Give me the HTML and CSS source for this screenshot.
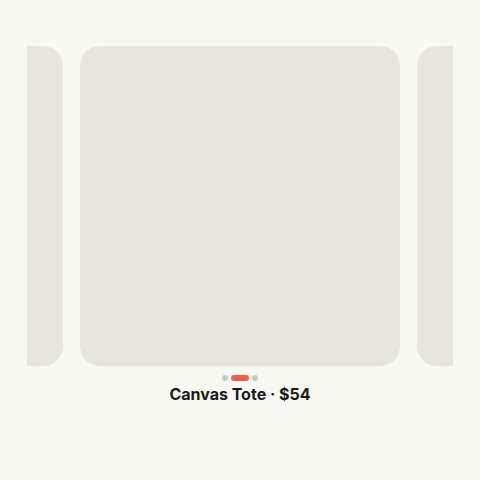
FILE: index.html
```html
<html>
    <head>
        <link rel="stylesheet" href="styles.css">
    </head>
    <body>
        <div class="carousel">
            <div class="track">
                <div class="card"></div>
                <div class="card"></div>
                <div class="card"></div>
            </div>
        </div>
        <div class="dots">
            <span class="dot"></span>
            <span class="dot active"></span>
            <span class="dot"></span>
        </div>
        <div class="title">Canvas Tote · $54</div>
    </body>
</html>
```

FILE: styles.css
```css
body
{
    margin: 0;
    background: #f9f9f4;
    font-family: Inter, "Liberation Sans", sans-serif;
}
.carousel
{
    width: 426px;
    margin: 46px auto 0;
    overflow: hidden;
    display: flex;
    justify-content: center;
}
.track
{
    display: flex;
    gap: 17px;
    flex-shrink: 0;
}
.card
{
    width: 320px;
    height: 320px;
    flex-shrink: 0;
    border-radius: 20px;
    background: #e8e5df;
}
.dots
{
    display: flex;
    justify-content: center;
    gap: 3px;
    margin-top: 9px;
}
.dot
{
    width: 6px;
    height: 6px;
    border-radius: 3px;
    background: #cac8c2;
}
.dot.active
{
    width: 18px;
    background: #f0604f;
}
.title
{
    margin-top: 3px;
    text-align: center;
    font-size: 16px;
    line-height: 20px;
    font-weight: 700;
    color: #1a1a18;
}
```
